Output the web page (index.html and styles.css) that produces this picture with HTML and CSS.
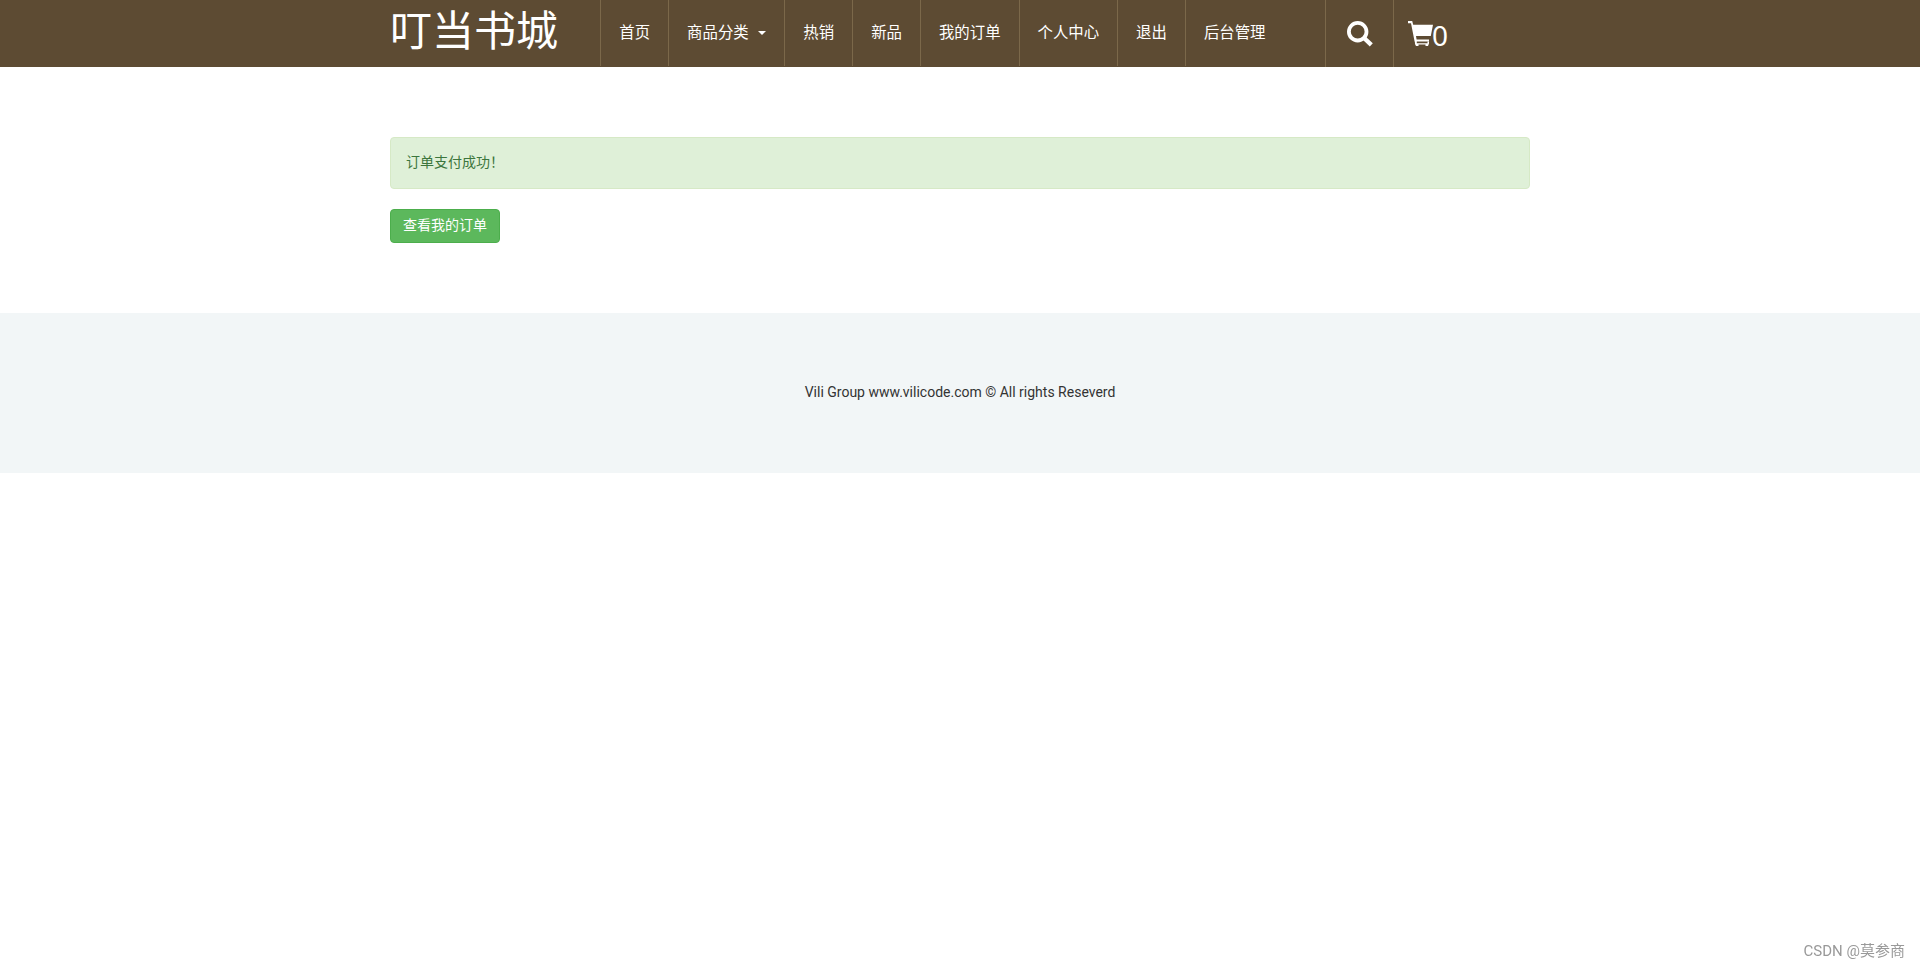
FILE: index.html
```html
<!DOCTYPE html>
<html lang="zh-CN">
<head>
  <meta charset="UTF-8">
  <meta name="viewport" content="width=device-width, initial-scale=1">
  <title>支付成功</title>
  <link rel="stylesheet" href="styles.css">
</head>
<body>
  <!--header-->
  <div class="header">
    <div class="container header-row">
      <h1 class="logo"><a href="#">叮当书城</a></h1>
      <ul class="nav">
        <li><a href="#">首页</a></li>
        <li class="dropdown"><a href="#">商品分类<span class="caret"></span></a></li>
        <li><a href="#">热销</a></li>
        <li><a href="#">新品</a></li>
        <li><a href="#">我的订单</a></li>
        <li><a href="#">个人中心</a></li>
        <li><a href="#">退出</a></li>
        <li><a href="#">后台管理</a></li>
      </ul>
      <a class="search" href="#">
        <svg width="27" height="26" viewBox="0 0 27 26">
          <circle cx="10.7" cy="10.7" r="8.8" fill="none" stroke="#fff" stroke-width="3.8"/>
          <path d="M16.5 16.5L24.3 23.8" stroke="#fff" stroke-width="4.4"/>
        </svg>
      </a>
      <a class="cart" href="#">
        <svg width="26" height="26" viewBox="0 0 26 26" fill="#fff">
          <path d="M0 0H4.2L5.2 3.8H25L22.8 15H8L8.6 18.4H21V20.4H6.6L3 2.2H0Z"/>
          <path d="M6.8 20H8.8V22.2H19.5V20.4H21V22.5L20 25H17.5V23.5H10.5V25H8L7 23Z"/>
        </svg>
        <span class="card-num">0</span>
      </a>
    </div>
  </div>

  <!--pay result-->
  <div class="content">
    <div class="container">
      <div class="alert">订单支付成功！</div>
      <a class="btn" href="#">查看我的订单</a>
    </div>
  </div>

  <!--footer-->
  <div class="footer">
    <p>Vili Group www.vilicode.com © All rights Reseverd</p>
  </div>

  <div class="watermark">CSDN @莫参商</div>
</body>
</html>
```

FILE: styles.css
```css
* {
  box-sizing: border-box;
}
body {
  margin: 0;
  background: #fff;
  font-family: Roboto, "Noto Sans CJK SC", sans-serif;
  font-size: 14px;
  line-height: 20px;
}
a {
  color: #fff;
  text-decoration: none;
}
.container {
  width: 1140px;
  margin: 0 auto;
}
/* header */
.header {
  background: #5d4b33;
  height: 67px;
}
.header-row {
  display: flex;
  height: 67px;
}
.logo {
  width: 210.3px;
  margin: 0;
  font-size: 42px;
  font-weight: 400;
  line-height: 64px;
}
.nav {
  display: flex;
  width: 724.7px;
  height: 66px;
  margin: 0;
  padding: 0;
  list-style: none;
}
.nav li {
  border-left: 1px solid #7b684a;
}
.nav a {
  display: flex;
  align-items: center;
  height: 66px;
  padding: 0 18px;
  font-size: 15.4px;
  white-space: nowrap;
}
.caret {
  margin-left: 9.7px;
  border-top: 4px solid #fff;
  border-left: 4px solid transparent;
  border-right: 4px solid transparent;
}
.search,
.cart {
  display: flex;
  border-left: 1px solid #7b684a;
}
.search {
  width: 68px;
  padding: 21px 0 0 21px;
}
.cart {
  padding: 21px 0 0 14px;
}
.card-num {
  margin-left: -2px;
  font-family: "Noto Sans", sans-serif;
  font-size: 28px;
  line-height: 29px;
}
/* content */
.content {
  padding: 70px 0;
}
.alert {
  height: 52px;
  margin-bottom: 20px;
  padding: 14px 15px;
  border: 1px solid #d6e9c6;
  border-radius: 4px;
  background: #dff0d8;
  color: #3c763d;
}
.btn {
  display: block;
  width: 110px;
  height: 34px;
  padding: 5px 12px;
  border: 1px solid #4cae4c;
  border-radius: 4px;
  background: #5cb85c;
  white-space: nowrap;
}
/* footer */
.footer {
  height: 160px;
  padding: 69px 0;
  background: #f2f6f7;
  color: #333;
  text-align: center;
}
.footer p {
  margin: 0;
}
.watermark {
  position: fixed;
  right: 15px;
  bottom: 8px;
  color: #999;
  font-size: 15px;
}
```
